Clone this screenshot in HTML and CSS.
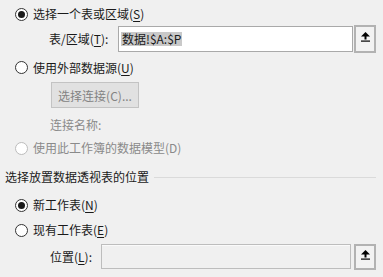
FILE: index.html
```html
<!doctype html>
<html lang="zh-CN">

<head>
    <meta charset="UTF-8" />
    <title>创建数据透视表</title>
    <link rel="stylesheet" href="styles.css">
</head>

<body>
    <div class="dialog">
        <label class="radio-row row-source">
            <span class="radio checked"></span>
            <span>选择一个表或区域(<u>S</u>)</span>
        </label>

        <div class="field-row row-range">
            <span class="field-label range-label">表/区域(<u>T</u>):</span>
            <div class="input"><span class="selected">数据!$A:$P</span></div>
            <button class="pick-btn" type="button">
                <svg width="9" height="10" viewBox="0 0 9 10">
                    <polygon points="4.5,0 0,4.5 9,4.5" fill="#000"></polygon>
                    <rect x="3.5" y="4" width="2" height="3.5" fill="#000"></rect>
                    <rect x="0" y="8.5" width="9" height="1.2" fill="#000"></rect>
                </svg>
            </button>
        </div>

        <label class="radio-row row-external">
            <span class="radio"></span>
            <span>使用外部数据源(<u>U</u>)</span>
        </label>

        <div class="conn-row">
            <button class="btn-disabled" type="button">选择连接(C)...</button>
        </div>

        <div class="conn-name">连接名称:</div>

        <label class="radio-row row-model disabled">
            <span class="radio"></span>
            <span>使用此工作簿的数据模型(D)</span>
        </label>

        <div class="section-title">
            <span>选择放置数据透视表的位置</span>
            <span class="section-line"></span>
        </div>

        <label class="radio-row row-new">
            <span class="radio checked"></span>
            <span>新工作表(<u>N</u>)</span>
        </label>

        <label class="radio-row row-existing">
            <span class="radio"></span>
            <span>现有工作表(<u>E</u>)</span>
        </label>

        <div class="field-row row-location">
            <span class="field-label loc-label">位置(<u>L</u>):</span>
            <div class="input input-disabled"></div>
            <button class="pick-btn" type="button">
                <svg width="9" height="10" viewBox="0 0 9 10">
                    <polygon points="4.5,0 0,4.5 9,4.5" fill="#000"></polygon>
                    <rect x="3.5" y="4" width="2" height="3.5" fill="#000"></rect>
                    <rect x="0" y="8.5" width="9" height="1.2" fill="#000"></rect>
                </svg>
            </button>
        </div>
    </div>
</body>

</html>
```

FILE: styles.css
```css
:root {
    --bg: #f0f0f0;
    --text: #1a1a1a;
    --text-disabled: #8a8a8a;
    --border: #a9a9a9;
    --line: #dadada;
}

* {
    box-sizing: border-box;
    margin: 0;
    padding: 0;
}

body {
    background-color: var(--bg);
    color: var(--text);
    font-family: "Noto Sans CJK SC", "Noto Sans", sans-serif;
    font-size: 12px;
    line-height: 1;
    width: 383px;
    height: 277px;
    overflow: hidden;
}

u {
    text-decoration: underline;
    text-underline-offset: 2px;
}

.dialog {
    display: flex;
    flex-direction: column;
    padding-top: 3px;
}

.radio-row {
    display: flex;
    align-items: center;
    gap: 5px;
    padding-left: 15px;
}

.radio {
    width: 13px;
    height: 13px;
    border: 1px solid #333;
    border-radius: 50%;
    background-color: #fff;
    display: flex;
    align-items: center;
    justify-content: center;
    flex-shrink: 0;
}

.radio.checked::after {
    content: "";
    width: 7px;
    height: 7px;
    border-radius: 50%;
    background-color: #1a1a1a;
}

.disabled {
    color: var(--text-disabled);
}

.disabled .radio {
    border-color: #bcbcbc;
}

.row-source {
    height: 22px;
}

.field-row {
    display: flex;
    align-items: center;
}

.row-range {
    height: 28px;
    padding-left: 49px;
}

.field-label {
    flex-shrink: 0;
}

.range-label {
    width: 69px;
}

.loc-label {
    width: 51px;
}

.input {
    height: 26px;
    background-color: #fff;
    border: 1px solid var(--border);
    display: flex;
    align-items: center;
    padding-left: 2px;
}

.row-range .input {
    width: 235px;
}

.selected {
    background-color: #c9c9c9;
    padding: 1px 1px;
}

.pick-btn {
    width: 22px;
    height: 28px;
    margin-left: 1px;
    background-color: #f2f2f2;
    border: 2px solid #b2b2b2;
    display: flex;
    align-items: center;
    justify-content: center;
    padding-bottom: 4px;
}

.row-external {
    height: 29px;
}

.conn-row {
    height: 26px;
    padding-left: 51px;
}

.btn-disabled {
    width: 88px;
    height: 26px;
    font-family: inherit;
    font-size: 12px;
    color: #838383;
    background-color: #e1e1e1;
    border: 1px solid #c3c3c3;
}

.conn-name {
    height: 18px;
    margin-top: 8px;
    padding-left: 50px;
    color: var(--text-disabled);
    display: flex;
    align-items: center;
}

.row-model {
    height: 28px;
}

.section-title {
    height: 30px;
    display: flex;
    align-items: center;
    gap: 5px;
    padding-left: 5px;
    padding-right: 7px;
}

.section-line {
    flex: 1;
    height: 1px;
    background-color: var(--line);
}

.row-new {
    height: 26px;
}

.row-existing {
    height: 24px;
}

.row-location {
    height: 25px;
    margin-top: 2px;
    padding-left: 50px;
}

.input-disabled {
    width: 250px;
    height: 25px;
    background-color: #f0f0f0;
    border-color: #bdbdbd;
    box-shadow: inset 0 1px 0 #fafafa;
}

.row-location .pick-btn {
    margin-left: 3px;
    height: 26px;
}
```
